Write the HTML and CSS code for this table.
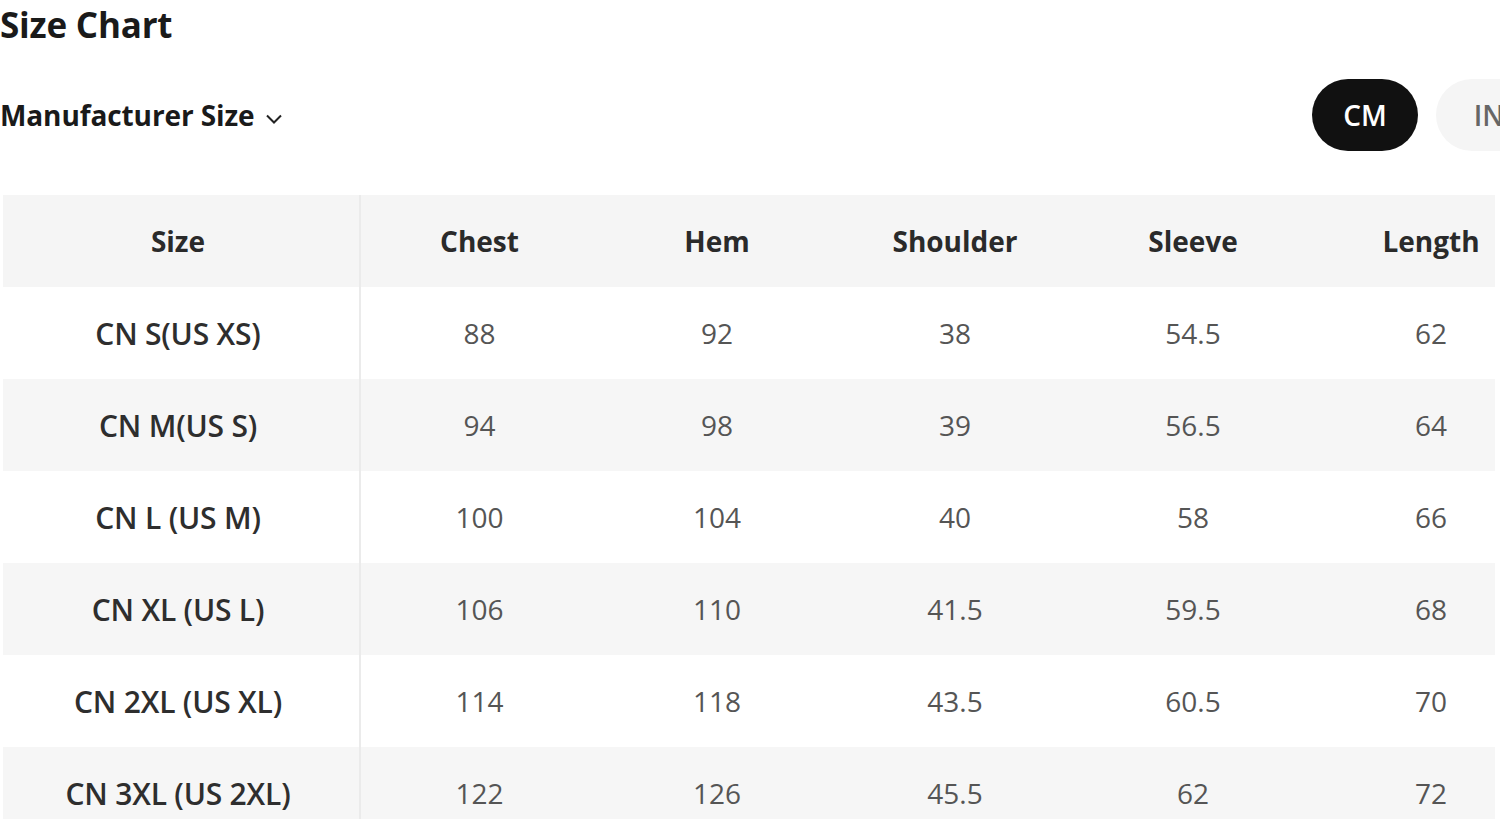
FILE: index.html
```html
<!DOCTYPE html>
<html lang="en">
<head>
<meta charset="utf-8">
<title>Size Chart</title>
<link rel="stylesheet" href="styles.css">
</head>
<body>
<div class="page">
  <h1 class="title">Size Chart</h1>
  <div class="toolbar">
    <button class="size-select">Manufacturer Size
      <svg class="chev" width="20" height="13" viewBox="0 0 20 13"><path d="M3 3.5 L10 10.5 L17 3.5" fill="none" stroke="#222" stroke-width="2"/></svg>
    </button>
    <div class="units">
      <span class="unit active">CM</span>
      <span class="unit">IN</span>
    </div>
  </div>
  <div class="table-wrap">
    <table class="chart">
      <colgroup>
        <col class="c-size"><col class="c-m"><col class="c-m"><col class="c-m"><col class="c-m"><col class="c-m">
      </colgroup>
      <thead>
        <tr><th class="first">Size</th><th>Chest</th><th>Hem</th><th>Shoulder</th><th>Sleeve</th><th>Length</th></tr>
      </thead>
      <tbody>
        <tr><td class="first">CN S(US XS)</td><td>88</td><td>92</td><td>38</td><td>54.5</td><td>62</td></tr>
        <tr><td class="first">CN M(US S)</td><td>94</td><td>98</td><td>39</td><td>56.5</td><td>64</td></tr>
        <tr><td class="first">CN L (US M)</td><td>100</td><td>104</td><td>40</td><td>58</td><td>66</td></tr>
        <tr><td class="first">CN XL (US L)</td><td>106</td><td>110</td><td>41.5</td><td>59.5</td><td>68</td></tr>
        <tr><td class="first">CN 2XL (US XL)</td><td>114</td><td>118</td><td>43.5</td><td>60.5</td><td>70</td></tr>
        <tr><td class="first">CN 3XL (US 2XL)</td><td>122</td><td>126</td><td>45.5</td><td>62</td><td>72</td></tr>
      </tbody>
    </table>
  </div>
</div>
</body>
</html>
```
FILE: styles.css
```css
html, body {
  margin: 0;
  padding: 0;
  background: #fff;
  overflow: hidden;
}
body {
  font-family: "Open Sans", "Noto Sans", "DejaVu Sans", sans-serif;
  color: #222;
}
.page {
  width: 1560px;
}
.title {
  margin: 0;
  padding-top: 2px;
  font-size: 35px;
  line-height: 46px;
  font-weight: 700;
  color: #1a1a1a;
  letter-spacing: -0.2px;
}
.toolbar {
  display: flex;
  align-items: center;
  justify-content: space-between;
  margin-top: 31px;
  width: 1542px;
}
.size-select {
  display: flex;
  align-items: center;
  gap: 9px;
  border: 0;
  background: none;
  padding: 0;
  font-family: inherit;
  font-size: 28px;
  font-weight: 700;
  color: #1a1a1a;
  letter-spacing: -0.1px;
}
.chev { margin-top: 6px; }
.units {
  display: flex;
  gap: 18px;
}
.unit {
  display: flex;
  align-items: center;
  justify-content: center;
  width: 106px;
  height: 72px;
  border-radius: 36px;
  background: #f5f5f5;
  color: #666;
  font-size: 28px;
  font-weight: 600;
}
.unit.active {
  background: #111;
  color: #fff;
}
.table-wrap {
  margin-top: 44px;
  margin-left: 3px;
  width: 1492px;
  overflow: hidden;
}
.chart {
  table-layout: fixed;
  border-collapse: collapse;
  width: 1547px;
}
.c-size { width: 357px; }
.c-m { width: 238px; }
.chart th, .chart td {
  height: 92px;
  padding: 0;
  text-align: center;
  vertical-align: middle;
}
.chart th {
  background: #f5f5f5;
  font-size: 28px;
  font-weight: 700;
  color: #2a2a2a;
}
.chart td {
  font-size: 28px;
  font-weight: 400;
  color: #555;
}
.chart tbody tr:nth-child(even) td {
  background: #f6f6f6;
}
.chart .first {
  padding-right: 6px;
  border-right: 2px solid #ebebeb;
}
.chart td.first {
  font-size: 30px;
  font-weight: 600;
  color: #2e2e2e;
  letter-spacing: -0.2px;
}
```
